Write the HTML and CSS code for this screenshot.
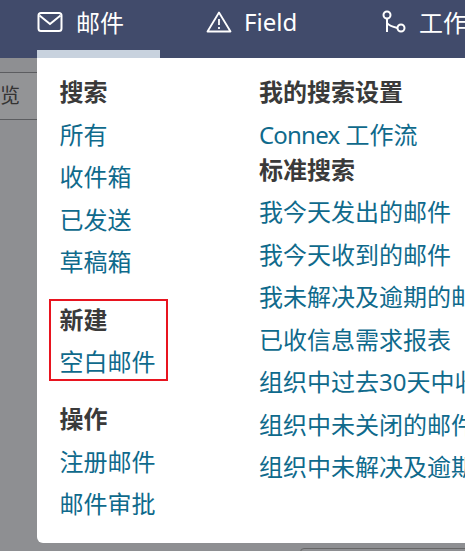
FILE: index.html
```html
<!DOCTYPE html>
<html lang="zh-CN">
<head>
    <meta charset="UTF-8">
    <title>邮件</title>
    <link rel="stylesheet" href="styles.css">
</head>
<body>
    <nav class="topnav">
        <div class="nav-item nav-mail">
            <svg class="nav-icon" width="26" height="22" viewBox="0 0 26 22" fill="none" stroke="#fff" stroke-width="2">
                <rect x="1.5" y="2" width="23" height="18" rx="2.5"/>
                <path d="M2.5 4.5 L13 13 L23.5 4.5"/>
            </svg>
            <span>邮件</span>
        </div>
        <div class="nav-item nav-field">
            <svg class="nav-icon" width="26" height="22" viewBox="0 0 26 22" fill="none" stroke="#fff" stroke-width="1.8">
                <path d="M13 1.5 L24.5 20.5 H1.5 Z" stroke-linejoin="round"/>
                <path d="M13 8 V14 M13 16 V18"/>
            </svg>
            <span>Field</span>
        </div>
        <div class="nav-item nav-flow">
            <svg class="nav-icon" width="24" height="24" viewBox="0 0 24 24" fill="none" stroke="#fff" stroke-width="2">
                <circle cx="5" cy="5" r="3.5"/>
                <circle cx="19" cy="18" r="3.5"/>
                <path d="M5 8.5 V22 M5 13 Q7 16 15.5 18"/>
            </svg>
            <span>工作流</span>
        </div>
    </nav>

    <div class="behind">
        <div class="behind-tab">览</div>
        <div class="behind-box"></div>
    </div>

    <div class="tab-marker"></div>
    <div class="menu">
        <div class="menu-col col-left">
            <div class="group">
                <h4>搜索</h4>
                <a>所有</a>
                <a>收件箱</a>
                <a>已发送</a>
                <a>草稿箱</a>
            </div>
            <div class="group group-marked">
                <h4>新建</h4>
                <a>空白邮件</a>
            </div>
            <div class="group">
                <h4>操作</h4>
                <a>注册邮件</a>
                <a>邮件审批</a>
            </div>
        </div>
        <div class="menu-col col-right">
            <h4>我的搜索设置</h4>
            <a><span class="latin">Connex</span> 工作流</a>
            <h4 class="tight">标准搜索</h4>
            <a>我今天发出的邮件</a>
            <a>我今天收到的邮件</a>
            <a>我未解决及逾期的邮件</a>
            <a>已收信息需求报表</a>
            <a>组织中过去30天中收到的邮件</a>
            <a>组织中未关闭的邮件</a>
            <a>组织中未解决及逾期的邮件</a>
        </div>
    </div>
</body>
</html>
```

FILE: styles.css
```css
html, body {
    margin: 0;
    width: 465px;
    height: 551px;
    overflow: hidden;
}
body {
    position: relative;
    background: #8e8f92;
    font-family: "Noto Sans", "Noto Sans CJK SC", sans-serif;
}
.topnav {
    display: flex;
    height: 58px;
    background: #414b6b;
    color: #fff;
    font-size: 24px;
    white-space: nowrap;
    overflow: hidden;
}
.nav-item {
    display: flex;
    align-items: center;
    gap: 13px;
    height: 43px;
    flex: none;
}
.nav-mail { margin-left: 37px; width: 169px; }
.nav-field { width: 176px; gap: 12px; }
.nav-flow { gap: 13px; }
.nav-icon { flex: none; }

.behind-tab {
    height: 46px;
    margin-top: 14px;
    border-top: 1px solid #5c5d60;
    border-bottom: 1px solid #5c5d60;
    width: 37px;
    font-size: 20px;
    line-height: 46px;
    color: #333;
    background: #939496;
}
.behind-box {
    position: absolute;
    left: 300px;
    top: 548px;
    width: 200px;
    height: 20px;
    border: 1px solid #666;
    border-radius: 4px;
}

.tab-marker {
    position: absolute;
    left: 37px;
    top: 50px;
    width: 123px;
    height: 8px;
    background: #c8d2de;
}
.menu {
    position: absolute;
    left: 37px;
    top: 58px;
    width: 428px;
    height: 485px;
    display: flex;
    background: #fff;
    border-radius: 0 0 0 6px;
    white-space: nowrap;
    overflow: hidden;
}
.menu-col { flex: none; }
.menu-col h4 {
    margin: 0;
    height: 42.5px;
    line-height: 42.5px;
    font-size: 24px;
    font-weight: 700;
    color: #3a3a3a;
}
.menu-col a {
    display: block;
    height: 42.5px;
    line-height: 42.5px;
    font-size: 24px;
    color: #0f6a8c;
}
.latin { letter-spacing: -0.8px; }
.col-left {
    width: 223px;
    padding: 13px 0 0 22.5px;
    box-sizing: border-box;
}
.group { margin-bottom: 15px; }
.group-marked {
    width: 119px;
    height: 82px;
    box-sizing: border-box;
    margin: 0 0 17.5px -10.5px;
    padding: 0 0 0 8.5px;
    border: 2px solid #e8141f;
}
.group-marked h4 { height: 37px; line-height: 37px; }
.group-marked a { height: 43px; line-height: 47px; }
.col-right { padding-top: 13px; margin-left: -1px; }
.col-right h4.tight { height: 28px; line-height: 28px; margin-bottom: 7px; }
```
